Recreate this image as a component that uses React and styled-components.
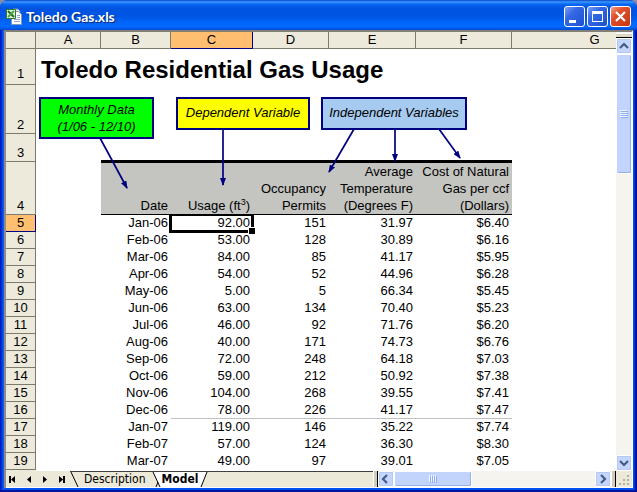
import { useState } from "react";
import styled, { createGlobalStyle } from "styled-components";

const GlobalStyle = createGlobalStyle`
  body {
    margin: 0;
    background-color: #8c8ca8;
    font-family: "Liberation Sans", Arial, sans-serif;
  }

  * {
    box-sizing: border-box;
  }
`;

const Window = styled.div`
  padding: 0 4px 5px;
  border-radius: 8px 8px 0 0;
  overflow: hidden;
  background: linear-gradient(
    to right,
    #0014b4 0,
    #0038e0 2px,
    #1668f8 4px,
    #0050f0 5px,
    #0050f0 calc(100% - 3px),
    #0018b8 calc(100% - 2px),
    #00108c 100%
  );
  box-shadow: inset 0 -3px 0 #0014a0;
`;

const TitleBar = styled.header`
  display: flex;
  align-items: center;
  gap: 4px;
  height: 30px;
  margin: 0 -4px;
  padding: 3px 6px 0 6px;
  background: linear-gradient(
    to bottom,
    #0848c8 0,
    #3c98ff 2px,
    #0868f4 4px,
    #0054e0 8px,
    #0054e4 16px,
    #0068ff 24px,
    #0068ff 27px,
    #0048d0 30px
  );
`;

const Title = styled.h1`
  flex: 1;
  margin: 0;
  color: white;
  font-family: Lato, "Open Sans", sans-serif;
  font-size: 14px;
  font-weight: 700;
  line-height: 20px;
  text-shadow: 1px 1px 1px #0a246a;
`;

const WindowButtons = styled.div`
  display: flex;
  gap: 2px;
`;

const WindowButton = styled.button`
  display: flex;
  align-items: center;
  justify-content: center;
  width: 21px;
  height: 21px;
  padding: 0;
  border: 1px solid white;
  border-radius: 3px;
  background: ${(props) =>
    props.$close
      ? "linear-gradient(135deg, #f0a080 0, #e0502c 35%, #c83410 100%)"
      : "linear-gradient(135deg, #7ca0f8 0, #3468e4 35%, #1c50d0 100%)"};
`;

const Body = styled.main`
  border: solid;
  border-width: 2px 1px 0 2px;
  border-color: #808078 white white #8c8c88;
  background-color: white;
`;

const Content = styled.div`
  display: flex;
`;

const Sheet = styled.div`
  position: relative;
  flex: 1;
  min-width: 0;
  overflow: hidden;
`;

const Grid = styled.table`
  table-layout: fixed;
  width: 672px;
  min-width: 100%;
  border-spacing: 0;
  font-size: 13px;
  line-height: 17px;
`;

const Col = styled.col`
  width: ${(props) => props.$width};
`;

const Row = styled.tr`
  height: ${(props) => props.$height || "17px"};
`;

const Heading = styled.th`
  height: inherit;
  padding: 0;
  border: solid ${(props) => (props.$active ? "#000080" : "#7c7a6c")};
  border-width: 0 1px 1px 0;
  background-color: ${(props) => (props.$active ? "#ffbe70" : "#edeadb")};
  font-weight: 400;
  line-height: 16px;
  vertical-align: bottom;
`;

const RowHeading = styled(Heading)`
  padding-bottom: ${(props) => props.$lift || "1px"};
  line-height: 15px;
`;

const Cell = styled.td`
  position: relative;
  padding: 0 3px 1px 0;
  line-height: ${(props) => (props.$ruled ? "15px" : "16px")};
  text-align: right;
  vertical-align: bottom;
  white-space: nowrap;
  border-bottom: ${(props) => (props.$ruled ? "1px solid #c0c0c0" : "none")};
`;

const SheetTitle = styled.td`
  padding: 0 0 1px 5px;
  font-size: 24px;
  font-weight: 700;
  line-height: 28px;
  vertical-align: bottom;
  white-space: nowrap;
`;

const ThickRule = styled.td`
  padding: 0;
  border-bottom: 2px solid black;
`;

const Label = styled.td`
  padding: 0 3px 0 0;
  border: solid black;
  border-width: 1px 0;
  background-color: #c4c5c0;
  text-align: right;
  vertical-align: bottom;
  white-space: pre;

  sup {
    font-size: 9px;
    line-height: 0;
    vertical-align: 5px;
  }
`;

const Sliver = styled.td`
  height: 1px;
  padding: 0;
  background-color: ${(props) => (props.$heading ? "#edeadb" : "white")};
`;

const Selection = styled.span`
  position: absolute;
  inset: -1px -1px -1px -2px;
  border: 3px solid black;
  border-top-width: 2px;

  &::after {
    content: "";
    position: absolute;
    right: -4px;
    bottom: -4px;
    width: 6px;
    height: 6px;
    border: solid white;
    border-width: 1px 0 0 1px;
    background-color: black;
  }
`;

const Callout = styled.div`
  position: absolute;
  top: 65px;
  left: ${(props) => props.$left};
  width: ${(props) => props.$width};
  padding: ${(props) => props.$padding || "5px 0 7px"};
  border: 2px solid #000080;
  background-color: ${(props) => props.$color};
  font-size: 13px;
  font-style: italic;
  line-height: 17px;
  text-align: center;
  white-space: pre;
`;

const Arrows = styled.svg`
  position: absolute;
  top: 0;
  left: 0;
  pointer-events: none;
`;

const VerticalScroll = styled.div`
  display: flex;
  flex-direction: column;
  width: 16px;
  padding: 1px 0 0;
  background-color: #f5f4ee;
`;

const SplitBox = styled.div`
  height: 5px;
  border-top: 1px solid white;
  border-bottom: 1px solid black;
  background-color: #dcd8c8;
`;

const ScrollButton = styled.button`
  display: flex;
  flex: none;
  align-items: center;
  justify-content: center;
  width: 16px;
  height: 16px;
  padding: 0;
  border: 1px solid white;
  border-radius: 2px;
  outline: 1px solid #b4c8f4;
  outline-offset: -2px;
  background-color: #c6d5fc;
`;

const Track = styled.div`
  display: flex;
  flex: 1;
  flex-direction: ${(props) => (props.$vertical ? "column" : "row")};
  background-color: #f5f4ee;
`;

const Thumb = styled.div`
  display: flex;
  flex: 0 0 ${(props) => props.$size};
  align-items: center;
  justify-content: center;
  border: 1px solid white;
  border-radius: 2px;
  background-color: #c2d3fc;
  box-shadow: inset -1px -1px 0 #98b0e8;
`;

const BottomBar = styled.div`
  display: flex;
  height: 17px;
  border-bottom: 1px solid white;
  background-color: #ece9d8;
`;

const TabArea = styled.div`
  display: flex;
  flex: 61;
  min-width: 0;
`;

const NavButton = styled.button`
  flex: none;
  width: 16px;
  height: 16px;
  padding: 0;
  border: 0;
  background: none;

  svg {
    display: block;
  }
`;

const Tabs = styled.nav`
  display: flex;
  flex: 1;
  border-top: 1px solid #404040;
`;

const Tab = styled.button`
  height: 15px;
  padding: 0;
  border: 0;
  background-color: ${(props) => (props.$active ? "white" : "transparent")};
  color: black;
  font-family: "DejaVu Sans Condensed", "DejaVu Sans", sans-serif;
  font-size: 12px;
  font-weight: ${(props) => (props.$active ? 700 : 400)};
  line-height: 15px;
`;

const Splitter = styled.div`
  flex: none;
  width: 5px;
  border-left: 1px solid white;
  border-right: 1px solid black;
  background-color: #d0ccbc;
`;

const HorizontalScroll = styled.div`
  display: flex;
  flex: 39;
  min-width: 0;
`;

const columns = [
  { name: "A", width: "65px" },
  { name: "B", width: "70px" },
  { name: "C", width: "82px" },
  { name: "D", width: "76px" },
  { name: "E", width: "87px" },
  { name: "F", width: "96px" },
  { name: "G", width: "auto" },
];

const rows = [
  ["Jan-06", "92.00", "151", "31.97", "$6.40"],
  ["Feb-06", "53.00", "128", "30.89", "$6.16"],
  ["Mar-06", "84.00", "85", "41.17", "$5.95"],
  ["Apr-06", "54.00", "52", "44.96", "$6.28"],
  ["May-06", "5.00", "5", "66.34", "$5.45"],
  ["Jun-06", "63.00", "134", "70.40", "$5.23"],
  ["Jul-06", "46.00", "92", "71.76", "$6.20"],
  ["Aug-06", "40.00", "171", "74.73", "$6.76"],
  ["Sep-06", "72.00", "248", "64.18", "$7.03"],
  ["Oct-06", "59.00", "212", "50.92", "$7.38"],
  ["Nov-06", "104.00", "268", "39.55", "$7.41"],
  ["Dec-06", "78.00", "226", "41.17", "$7.47"],
  ["Jan-07", "119.00", "146", "35.22", "$7.74"],
  ["Feb-07", "57.00", "124", "36.30", "$8.30"],
  ["Mar-07", "49.00", "97", "39.01", "$7.05"],
];

const navIcons = [
  { label: "First sheet", d: "M3 5h2v7H3z M9 5v7L5 8.500z" },
  { label: "Previous sheet", d: "M9 5v7L5 8.500z" },
  { label: "Next sheet", d: "M5 5v7l4-3.500z" },
  { label: "Last sheet", d: "M5 5v7l4-3.500z M9 5h2v7H9z" },
];

const chevrons = {
  up: "M4 10l4-4 4 4",
  down: "M4 6l4 4 4-4",
  left: "M9 4L5 8l4 4",
  right: "M6 4l4 4-4 4",
};

const FileIcon = () => (
  <svg width="16" height="17" viewBox="0 0 16 17">
    <path d="M7 1h5l2 2v10H7z" fill="#dce8f8" stroke="#7890b0" />
    <path d="M5.500 3.500h7l3 3v10h-10z" fill="white" stroke="#8098b8" />
    <path d="M11 7.500h3M11 9.500h3M8 11.500h6M8 13.500h6" stroke="#90a8c8" />
    <path d="M0.500 1.500h9v9h-9z" fill="#e8f4e0" stroke="#2c7c2c" />
    <path d="M2 3l6 6" stroke="#1c6c1c" strokeWidth="2" />
    <path d="M8 3L2 9" stroke="#48a048" strokeWidth="2" />
  </svg>
);

const ScrollArrow = ({ direction }) => (
  <ScrollButton aria-label={`Scroll ${direction}`}>
    <svg width="14" height="14" viewBox="1 1 14 14">
      <path
        d={chevrons[direction]}
        fill="none"
        stroke="#445c8c"
        strokeWidth="2.200"
      />
    </svg>
  </ScrollButton>
);

const Grip = ({ vertical }) => (
  <svg width="8" height="8" viewBox="0 0 8 8">
    <g transform={vertical ? undefined : "matrix(0 1 1 0 0 0)"}>
      <path d="M0 .5h7M0 2.500h7M0 4.500h7M0 6.500h7" stroke="#f2f6ff" />
      <path d="M1 1.500h7M1 3.500h7M1 5.500h7M1 7.500h7" stroke="#8cacf4" />
    </g>
  </svg>
);

const SizeGrip = () => (
  <svg width="16" height="16" viewBox="0 0 16 16">
    <path
      d="M11 4h2v2h-2z M7 8h2v2H7z M11 8h2v2h-2z M3 12h2v2H3z M7 12h2v2H7z M11 12h2v2h-2z"
      fill="#b4b09c"
    />
  </svg>
);

const Shapes = () => (
  <>
    <Callout $left="33px" $width="115px" $color="#00ff00" $padding="2px 0">
      {"Monthly Data\n(1/06 - 12/10)"}
    </Callout>
    <Callout $left="170px" $width="134px" $color="#ffff00">
      Dependent Variable
    </Callout>
    <Callout $left="315px" $width="146px" $color="#a6caf0">
      Independent Variables
    </Callout>
    <Arrows width="480" height="170" viewBox="0 0 480 170">
      <defs>
        <marker
          id="head"
          markerWidth="8"
          markerHeight="6"
          refX="7"
          refY="3"
          orient="auto"
          markerUnits="userSpaceOnUse"
        >
          <path d="M0 0l8 3-8 3z" fill="#000080" />
        </marker>
      </defs>
      <g stroke="#000080" strokeWidth="1.700">
        <path d="M94 106l27 50" markerEnd="url(#head)" />
        <path d="M217 97v56" markerEnd="url(#head)" />
        <path d="M348 97l-25 43" markerEnd="url(#head)" />
        <path d="M389 97v32" markerEnd="url(#head)" />
        <path d="M433 97l21 29" markerEnd="url(#head)" />
      </g>
    </Arrows>
  </>
);

const App = () => {
  const [tab, setTab] = useState("Model");

  return (
    <>
      <GlobalStyle />
      <Window>
        <TitleBar>
          <FileIcon />
          <Title>Toledo Gas.xls</Title>
          <WindowButtons>
            <WindowButton aria-label="Minimize">
              <svg width="17" height="17" viewBox="0 0 17 17">
                <path d="M3 12h7v3H3z" fill="white" />
              </svg>
            </WindowButton>
            <WindowButton aria-label="Maximize">
              <svg width="17" height="17" viewBox="0 0 17 17">
                <path d="M3 3h11v11H3z M4 6v7h9V6z" fill="white" fillRule="evenodd" />
              </svg>
            </WindowButton>
            <WindowButton aria-label="Close" $close>
              <svg width="17" height="17" viewBox="0 0 17 17">
                <path d="M4 4l9 9M13 4l-9 9" stroke="white" strokeWidth="2.200" />
              </svg>
            </WindowButton>
          </WindowButtons>
        </TitleBar>
        <Body>
          <Content>
            <Sheet>
              <Grid>
                <colgroup>
                  <Col $width="30px" />
                  {columns.map((col) => (
                    <Col key={col.name} $width={col.width} />
                  ))}
                </colgroup>
                <thead>
                  <Row>
                    <Heading />
                    {columns.map((col) => (
                      <Heading key={col.name} scope="col" $active={col.name === "C"}>
                        {col.name}
                      </Heading>
                    ))}
                  </Row>
                </thead>
                <tbody>
                  <Row $height="36px">
                    <RowHeading scope="row" $lift="3px">1</RowHeading>
                    <SheetTitle colSpan={7}>Toledo Residential Gas Usage</SheetTitle>
                  </Row>
                  <Row $height="49px">
                    <RowHeading scope="row">2</RowHeading>
                    <Cell colSpan={7} />
                  </Row>
                  <Row $height="28px">
                    <RowHeading scope="row">3</RowHeading>
                    <Cell />
                    <ThickRule colSpan={5} />
                    <Cell />
                  </Row>
                  <Row $height="52px">
                    <RowHeading scope="row">4</RowHeading>
                    <Cell />
                    <Label>Date</Label>
                    <Label>
                      Usage (ft<sup>3</sup>)
                    </Label>
                    <Label>{"Occupancy\nPermits"}</Label>
                    <Label>{"Average\nTemperature\n(Degrees F)"}</Label>
                    <Label>{"Cost of Natural\nGas per ccf\n(Dollars)"}</Label>
                    <Cell />
                  </Row>
                  {rows.map((row, i) => (
                    <Row key={row[0]}>
                      <RowHeading scope="row" $active={i === 0}>
                        {i + 5}
                      </RowHeading>
                      <Cell />
                      {row.map((value, j) => (
                        <Cell key={j} $ruled={row[0] === "Dec-06" && j > 0}>
                          {value}
                          {i === 0 && j === 1 && <Selection />}
                        </Cell>
                      ))}
                      <Cell />
                    </Row>
                  ))}
                  <Row $height="1px">
                    <Sliver $heading />
                    <Sliver colSpan={7} />
                  </Row>
                </tbody>
              </Grid>
              <Shapes />
            </Sheet>
            <VerticalScroll>
              <SplitBox />
              <ScrollArrow direction="up" />
              <Track $vertical>
                <Thumb $size="30%">
                  <Grip vertical />
                </Thumb>
              </Track>
              <ScrollArrow direction="down" />
            </VerticalScroll>
          </Content>
          <BottomBar>
            <TabArea>
              {navIcons.map((icon) => (
                <NavButton key={icon.label} aria-label={icon.label}>
                  <svg width="16" height="16" viewBox="0 0 16 16">
                    <path d={icon.d} />
                  </svg>
                </NavButton>
              ))}
              <Tabs>
                <svg width="14" height="15" viewBox="0 0 14 15">
                  <path d="M1 0l7 15" stroke="black" />
                </svg>
                <Tab $active={tab === "Description"} onClick={() => setTab("Description")}>
                  Description
                </Tab>
                <svg width="16" height="15" viewBox="0 0 16 15">
                  <path d="M7 0h9v15h-2z" fill="white" />
                  <path d="M7 0l7 15M12 10l-2 5" fill="none" stroke="black" />
                </svg>
                <Tab $active={tab === "Model"} onClick={() => setTab("Model")}>
                  Model
                </Tab>
                <svg width="10" height="15" viewBox="0 0 10 15">
                  <path d="M0 0h9L3 15H0z" fill="white" />
                  <path d="M9 0L3 15" stroke="black" />
                </svg>
              </Tabs>
              <Splitter />
            </TabArea>
            <HorizontalScroll>
              <ScrollArrow direction="left" />
              <Track>
                <Thumb $size="39%">
                  <Grip />
                </Thumb>
              </Track>
              <ScrollArrow direction="right" />
              <Splitter />
            </HorizontalScroll>
            <SizeGrip />
          </BottomBar>
        </Body>
      </Window>
    </>
  );
};

export default App;
